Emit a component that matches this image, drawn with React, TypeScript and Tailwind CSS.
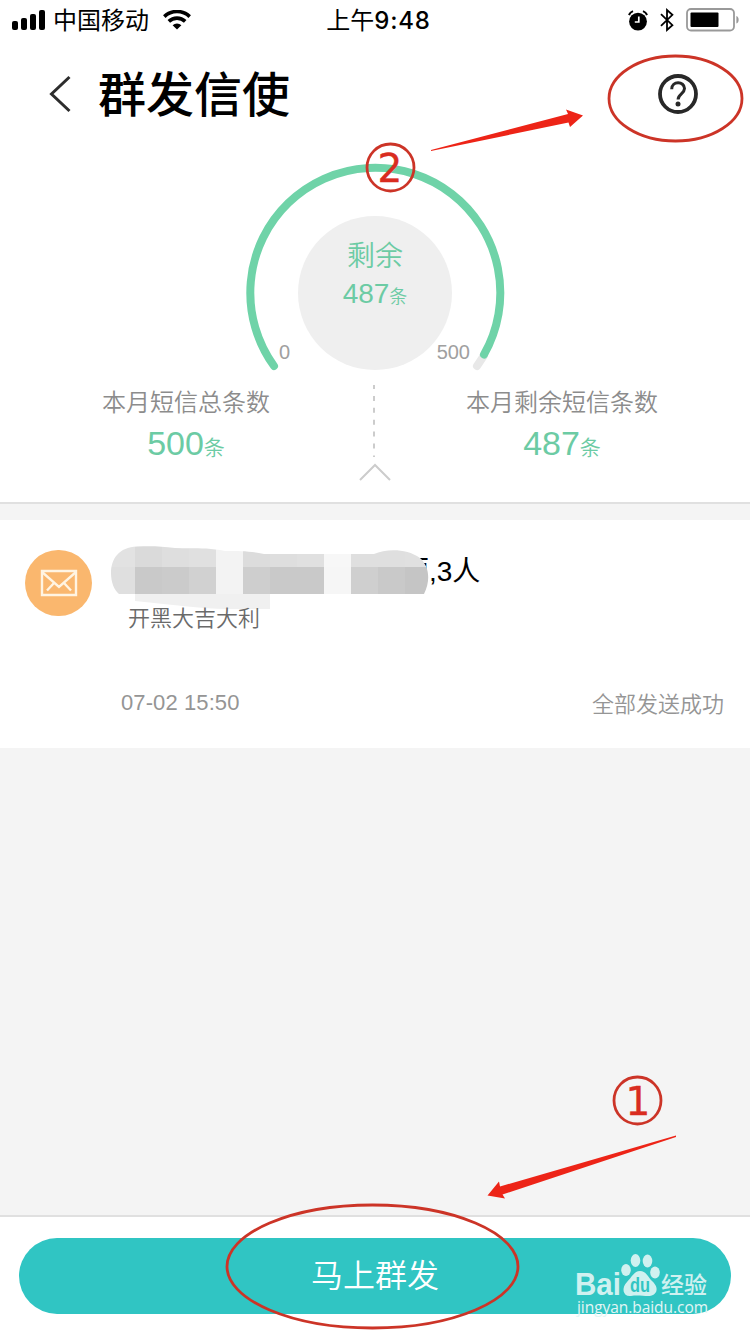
import React from 'react';

const STATS = [
  { id: 'total', label: '本月短信总条数', value: '500' },
  { id: 'left', label: '本月剩余短信条数', value: '487' },
];

// pixelated strip over the recipient names
const MOSAIC_TOP = ['#e2e2e2', '#dadada', '#dedede', '#e0e0e0', '#f3f3f3', '#dcdcdc', '#dedede', '#e0e0e0', '#f7f7f7', '#dfdfdf', '#dfdfdf', '#e0e0e0'];
const MOSAIC_MID = ['#dfdfdf', '#c9c9c9', '#cbcbcb', '#d1d1d1', '#f3f3f3', '#cecece', '#c9c9c9', '#c9c9c9', '#f6f6f6', '#cfcfcf', '#c9c9c9', '#c5c5c5'];

const StatusBar: React.FC = () => (
  <div className="flex h-10 items-center justify-between pl-3 pr-[11px] text-2xl leading-10 text-black">
    <div className="flex w-[300px] items-center">
      <svg width="34" height="20" viewBox="0 0 34 20">
        <rect x="0" y="11" width="6" height="9" rx="2" />
        <rect x="9" y="8" width="6" height="12" rx="2" />
        <rect x="18" y="4" width="6" height="16" rx="2" />
        <rect x="27" y="0" width="6" height="20" rx="2" />
      </svg>
      <span className="ml-[7px] pt-0.5 leading-[38px]">中国移动</span>
      <svg className="ml-[14px]" width="28" height="20" viewBox="0 0 28 20" fill="none" stroke="#000" strokeWidth="3.6">
        <path d="M1.3 6.6a18.3 18.3 0 0 1 25.4 0" />
        <path d="M5.8 11.4a11.8 11.8 0 0 1 16.4 0" />
        <path d="M14 19.6 9.6 15.3a6.4 6.4 0 0 1 8.8 0z" fill="#000" stroke="none" />
      </svg>
    </div>
    <div className="flex pl-1.5 pt-0.5 leading-[38px]">
      上午<span className="font-['Inter'] font-medium tracking-[0.8px]">9:48</span>
    </div>
    <div className="flex w-[300px] items-center justify-end">
      <svg width="20" height="21" viewBox="0 0 20 21">
        <circle cx="10" cy="11.6" r="8.9" />
        <path d="M.9 5A8 8 0 0 1 5 1.2M19.1 5A8 8 0 0 0 15 1.2" fill="none" stroke="#000" strokeWidth="2" />
        <path d="M10.8 6.5V12H6.8" fill="none" stroke="#fff" strokeWidth="1.7" />
      </svg>
      <svg className="ml-3" width="14" height="24" viewBox="0 0 14 24" fill="none" stroke="#000" strokeWidth="1.8">
        <path d="M1 6.2 12.4 17.2 7 22V2l5.4 4.8L1 17.8" />
      </svg>
      <svg className="-mr-px ml-3" width="54" height="24" viewBox="0 0 54 24">
        <rect x="1" y="1" width="47" height="21.5" rx="4" fill="none" stroke="#999" strokeWidth="1.8" />
        <rect x="4.5" y="4.5" width="28" height="14.5" rx="1" />
        <path d="M50.4 8c3 1 3 6.6 0 7.6z" fill="#999" />
      </svg>
    </div>
  </div>
);

const Header: React.FC = () => (
  <header className="flex h-[110px] items-center pl-[49px] pr-[51px]">
    <svg className="-mt-0.5" width="22" height="38" viewBox="0 0 22 38" fill="none" stroke="#2d2d2d" strokeWidth="3">
      <path d="M20.5 2 2.5 19 20.5 36" />
    </svg>
    <h1 className="ml-[27px] flex-1 pt-0.5 text-5xl font-medium text-black">群发信使</h1>
    <svg className="-mt-0.5" width="42" height="42" viewBox="0 0 42 42" fill="none" stroke="#282828" strokeWidth="3.8">
      <circle cx="21" cy="21" r="18" />
      <path d="M14.7 16.2c0-8.6 12.8-8.2 12.8-.6 0 5.2-6.4 5.4-6.4 10.9" strokeWidth="3" />
      <circle cx="21" cy="31" r="2.5" fill="#282828" stroke="none" />
    </svg>
  </header>
);

const Gauge: React.FC = () => (
  <div className="grid h-[230px] justify-center">
    <svg className="col-start-1 row-start-1" width="270" height="230" viewBox="240 150 270 230" fill="none" strokeWidth="8" strokeLinecap="round">
      <path d="M484 355.5 477 366" stroke="#e8e8e8" />
      <path d="M274 366A125 125 0 1 1 484 354.5" stroke="#6fd3a8" />
    </svg>
    <div className="col-start-1 row-start-1 mt-[66px] flex h-[154px] w-[154px] flex-col items-center justify-self-center rounded-full bg-[#efefef] pt-[22px] font-[350] text-[#6ccba4]">
      <span className="text-[28px] leading-[37px]">剩余</span>
      <span className="text-[28px] leading-[38px]">487<span className="text-lg">条</span></span>
    </div>
    <div className="col-start-1 row-start-1 mt-[190px] flex h-6 justify-between pl-[39px] pr-10 text-xl leading-6 text-[#a0a0a0]">
      <span>0</span>
      <span>500</span>
    </div>
  </div>
);

const Stats: React.FC = () => (
  <div className="grid h-[122px] grid-cols-[359px_32px_342px]">
    {STATS.map((stat, index) => (
      <React.Fragment key={stat.id}>
        {index > 0 && (
          <svg width="32" height="122" viewBox="0 0 32 122" fill="none" stroke="#ccc" strokeWidth="2">
            <path d="M15 5v72" strokeDasharray="5 6.9" strokeDashoffset="1" />
            <path d="M1 100 16 85 31 100" />
          </svg>
        )}
        <div className={index > 0 ? 'text-center' : 'pl-[13px] text-center'}>
          <div className="pt-[5px] text-2xl font-[350] leading-9 text-[#8c8c8c]">{stat.label}</div>
          <div className="text-[34px] leading-[44px] text-[#6ccba4]">
            {stat.value}<span className="text-[21px] font-[350]">条</span>
          </div>
        </div>
      </React.Fragment>
    ))}
  </div>
);

const Mosaic: React.FC = () => (
  <svg className="absolute left-[110px] top-[26px]" width="320" height="66" viewBox="110 546 320 66">
    <clipPath id="brush">
      <path d="M137 546.500C119 547 111 559 111 573C111 582 114 590 119 594H135V601C175 605 205 609 225 609H270V594H424C431 580 429 566 420 558C406 548 386 549 374 554H264C250 551 240 551 225 551C205 547 190 549 175 548C160 546 150 546 137 546.500Z" />
    </clipPath>
    <g clipPath="url(#brush)">
      {MOSAIC_TOP.map((fill, i) => (
        <rect key={i} x={108 + i * 27} y="546" width="27" height="21" fill={fill} />
      ))}
      {MOSAIC_MID.map((fill, i) => (
        <rect key={i} x={108 + i * 27} y="567" width="27" height="27" fill={fill} />
      ))}
      <rect x="135" y="594" width="135" height="16" fill="#f0f0f0" />
    </g>
  </svg>
);

const MessageCard: React.FC = () => (
  <article className="relative flex h-[228px] bg-white pl-[25px] pr-[26px]">
    <div className="mt-[30px] flex h-[66px] w-[67px] items-center justify-center rounded-full bg-[#fab76e]">
      <svg width="38" height="28" viewBox="0 0 38 28" fill="none" stroke="#fff4e2" strokeWidth="2.4">
        <path d="M2 2h34v24H2z" />
        <path d="M2 3 19 18 36 3M7 21.5l7-7.5M31 21.5 24 14" />
      </svg>
    </div>
    <div className="flex-1 pl-[29px]">
      <div className="mt-8 pl-[280px] text-[28px] leading-10 text-black">丽,3人</div>
      <div className="relative z-10 mt-[9px] pl-[7px] text-[22px] font-[350] leading-9 text-[#6a6a6a]">开黑大吉大利</div>
      <div className="mt-[46px] flex justify-between text-[22px] leading-10 text-[#959595]">
        <span className="tracking-[0.1px]">07-02 15:50</span>
        <span className="pt-0.5 font-[350]">全部发送成功</span>
      </div>
    </div>
    <Mosaic />
  </article>
);

const Annotations: React.FC = () => (
  <svg className="pointer-events-none absolute inset-0 z-20" width="750" height="1334" viewBox="0 0 750 1334">
    <g fill="none" stroke="#cc3427" strokeWidth="2.8">
      <ellipse cx="675.5" cy="98.5" rx="66.5" ry="42.5" />
      <ellipse cx="372.5" cy="1266.5" rx="145.5" ry="61.5" />
      <circle cx="390.5" cy="167.5" r="23.5" />
      <circle cx="637.5" cy="1100.5" r="23.5" />
    </g>
    <g fill="#d92c20" stroke="#d92c20" strokeWidth="0.4" fontFamily="DejaVu Sans" fontSize="39" textAnchor="middle">
      <text x="390" y="182">2</text>
      <text x="638" y="1115">1</text>
    </g>
    <path d="M431 150 568 114 566 109.5 583 115.5 570 127 568.5 122.5 431 151Z" fill="#ed2417" />
    <path d="M676 1135.5 500 1186.5 499 1181.5 487.5 1195.5 505 1198.5 502.5 1194.5 676 1137Z" fill="#ed2417" />
  </svg>
);

const Watermark: React.FC = () => (
  <svg className="absolute left-[570px] top-[1248px]" width="145" height="72" viewBox="570 1248 145 72" fill="#d0f1f0">
    <g fontFamily="Liberation Sans, Noto Sans CJK SC, sans-serif" fontWeight="bold">
      <text x="575" y="1295" fontSize="31" textLength="46" lengthAdjust="spacingAndGlyphs">Bai</text>
      <text x="661" y="1293" fontSize="23" fontWeight="500" textLength="46">经验</text>
    </g>
    <ellipse cx="626" cy="1270" rx="4.8" ry="6" />
    <ellipse cx="635.5" cy="1260.5" rx="4.8" ry="6.5" />
    <ellipse cx="647.5" cy="1261" rx="4.8" ry="6.5" />
    <ellipse cx="655" cy="1272.5" rx="4.8" ry="6" />
    <path d="M640 1271c6 0 8 6 12 10 8 7 5 15-4 15-5 0-11-1-17 0-8 1-10-8-4-14 5-5 7-11 13-11z" />
    <text x="640" y="1292" fontFamily="Liberation Sans, sans-serif" fontWeight="bold" fontSize="20" textAnchor="middle" fill="#30c5c3" textLength="20" lengthAdjust="spacingAndGlyphs">du</text>
    <text x="577" y="1313" fontFamily="Open Sans, sans-serif" fontSize="15.5" textLength="131" fill="#e3f6f5">jingyan.baidu.com</text>
  </svg>
);

export default function App() {
  return (
    <div className="relative flex h-[1334px] w-[750px] flex-col overflow-hidden bg-[#f4f4f4] font-['Liberation_Sans','Noto_Sans_CJK_SC',sans-serif]">
      <section className="h-[504px] border-b-2 border-[#e0e0e0] bg-white">
        <StatusBar />
        <Header />
        <Gauge />
        <Stats />
      </section>
      <main className="flex-1 pt-4">
        <MessageCard />
      </main>
      <footer className="h-[119px] border-t-2 border-[#e0e0e0] bg-white px-[19px] pt-[21px]">
        <button className="h-[76px] w-full rounded-full bg-[#30c5c3] text-[32px] font-[350] text-white">马上群发</button>
      </footer>
      <Annotations />
      <Watermark />
    </div>
  );
}
